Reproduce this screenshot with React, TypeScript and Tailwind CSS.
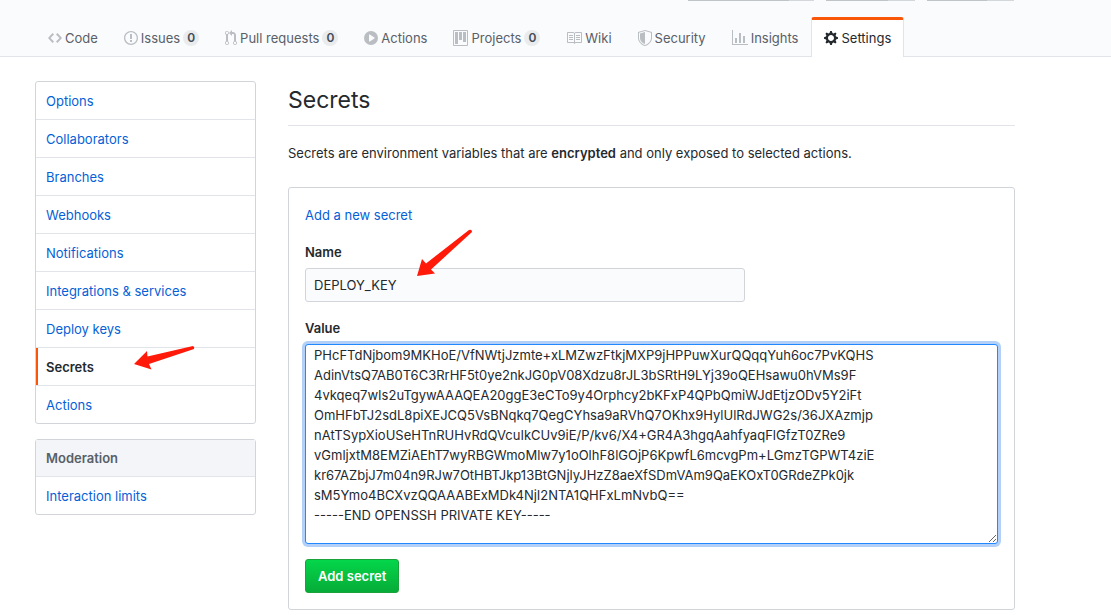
import React from "react";

type IconProps = { d: string; width: number; className?: string };

function Octicon({ d, width, className = "text-[#babec2]" }: IconProps) {
  return (
    <svg
      className={`shrink-0 fill-current ${className}`}
      width={width}
      height={16}
      viewBox={`0 0 ${width} 16`}
      fillRule="evenodd"
      aria-hidden="true"
    >
      <path d={d} />
    </svg>
  );
}

type Tab = { label: string; width: number; d: string; count?: number; current?: boolean };

const tabs: Tab[] = [
  {
    label: "Code",
    width: 14,
    d: "M9.5 3L8 4.5 11.5 8 8 11.5 9.5 13 14 8 9.5 3zm-5 0L0 8l4.5 5L6 11.5 2.5 8 6 4.5 4.5 3z",
  },
  {
    label: "Issues",
    width: 14,
    count: 0,
    d: "M7 2.3c3.14 0 5.7 2.56 5.7 5.7s-2.56 5.7-5.7 5.7A5.71 5.71 0 011.3 8c0-3.14 2.56-5.7 5.7-5.7zM7 1C3.14 1 0 4.14 0 8s3.14 7 7 7 7-3.14 7-7-3.14-7-7-7zm1 3H6v5h2V4zm0 6H6v2h2v-2z",
  },
  {
    label: "Pull requests",
    width: 12,
    count: 0,
    d: "M11 11.28V5c-.03-.78-.34-1.47-.94-2.06C9.46 2.35 8.78 2.03 8 2H7V0L4 3l3 3V4h1c.27.02.48.11.69.31.21.2.3.42.31.69v6.28A1.993 1.993 0 0010 15a1.993 1.993 0 001-3.72zm-1 2.92c-.66 0-1.2-.55-1.2-1.2 0-.65.55-1.2 1.2-1.2.65 0 1.2.55 1.2 1.2 0 .65-.55 1.2-1.2 1.2zM4 3c0-1.11-.89-2-2-2a1.993 1.993 0 00-1 3.72v6.56A1.993 1.993 0 002 15a1.993 1.993 0 001-3.72V4.72c.59-.34 1-.98 1-1.72zm-.8 10c0 .66-.55 1.2-1.2 1.2-.65 0-1.2-.55-1.2-1.2 0-.65.55-1.2 1.2-1.2.65 0 1.2.55 1.2 1.2zM2 4.2C1.34 4.2.8 3.65.8 3c0-.65.55-1.2 1.2-1.2.65 0 1.2.55 1.2 1.2 0 .65-.55 1.2-1.2 1.2z",
  },
  {
    label: "Actions",
    width: 14,
    d: "M14 8A7 7 0 110 8a7 7 0 0114 0zm-8.223 3.482l4.599-3.066a.5.5 0 000-.832L5.777 4.518A.5.5 0 005 4.934v6.132a.5.5 0 00.777.416z",
  },
  {
    label: "Projects",
    width: 15,
    count: 0,
    d: "M10 12h3V2h-3v10zm-4-2h3V2H6v8zm-4 4h3V2H2v12zm-1 1h13V1H1v14zM14 0H1a1 1 0 00-1 1v14a1 1 0 001 1h13a1 1 0 001-1V1a1 1 0 00-1-1z",
  },
  {
    label: "Wiki",
    width: 16,
    d: "M3 5h4v1H3V5zm0 3h4V7H3v1zm0 2h4V9H3v1zm11-5h-4v1h4V5zm0 2h-4v1h4V7zm0 2h-4v1h4V9zm2-6v9c0 .55-.45 1-1 1H9.5l-1 1-1-1H2c-.55 0-1-.45-1-1V3c0-.55.45-1 1-1h5.5l1 1 1-1H15c.55 0 1 .45 1 1zm-8 .5L7.5 3H2v9h6V3.5zm7-.5H9.5l-.5.5V12h6V3z",
  },
  {
    label: "Security",
    width: 14,
    d: "M0 2l7-2 7 2v6.02C14 12.69 8.69 16 7 16c-1.69 0-7-3.31-7-7.98V2zm1 .75L7 1l6 1.75v5.268C13 12.104 8.449 15 7 15c-1.449 0-6-2.896-6-6.982V2.75zm1 .75L7 2v12c-1.207 0-5-2.482-5-5.985V3.5z",
  },
  {
    label: "Insights",
    width: 16,
    d: "M16 14v1H0V0h1v14h15zM5 13H3V8h2v5zm4 0H7V3h2v10zm4 0h-2V6h2v7z",
  },
  {
    label: "Settings",
    width: 14,
    current: true,
    d: "M14 8.77v-1.6l-1.94-.64-.45-1.09.88-1.84-1.13-1.13-1.81.91-1.09-.45-.69-1.92h-1.6l-.63 1.94-1.11.45-1.84-.88-1.13 1.13.91 1.81-.45 1.09L0 7.23v1.59l1.94.64.45 1.09-.88 1.84 1.13 1.13 1.81-.91 1.09.45.69 1.92h1.59l.63-1.94 1.11-.45 1.84.88 1.13-1.13-.92-1.81.47-1.09L14 8.75v.02zM7 11c-1.66 0-3-1.34-3-3s1.34-3 3-3 3 1.34 3 3-1.34 3-3 3z",
  },
];

const menu = [
  "Options",
  "Collaborators",
  "Branches",
  "Webhooks",
  "Notifications",
  "Integrations & services",
  "Deploy keys",
  "Secrets",
  "Actions",
];

const secretValue = [
  "PHcFTdNjbom9MKHoE/VfNWtjJzmte+xLMZwzFtkjMXP9jHPPuwXurQQqqYuh6oc7PvKQHS",
  "AdinVtsQ7AB0T6C3RrHF5t0ye2nkJG0pV08Xdzu8rJL3bSRtH9LYj39oQEHsawu0hVMs9F",
  "4vkqeq7wIs2uTgywAAAQEA20ggE3eCTo9y4Orphcy2bKFxP4QPbQmiWJdEtjzODv5Y2iFt",
  "OmHFbTJ2sdL8piXEJCQ5VsBNqkq7QegCYhsa9aRVhQ7OKhx9HylUlRdJWG2s/36JXAzmjp",
  "nAtTSypXioUSeHTnRUHvRdQVcuIkCUv9iE/P/kv6/X4+GR4A3hgqAahfyaqFlGfzT0ZRe9",
  "vGmljxtM8EMZiAEhT7wyRBGWmoMlw7y1oOlhF8lGOjP6KpwfL6mcvgPm+LGmzTGPWT4ziE",
  "kr67AZbjJ7m04n9RJw7OtHBTJkp13BtGNjlyJHzZ8aeXfSDmVAm9QaEKOxT0GRdeZPk0jk",
  "sM5Ymo4BCXvzQQAAABExMDk4NjI2NTA1QHFxLmNvbQ==",
  "-----END OPENSSH PRIVATE KEY-----",
].join("\n");

function RepoHeader() {
  return (
    <header className="border-b border-[#e1e4e8] bg-[#fafbfc]">
      <div className="max-w-[1050px] px-[35px]">
        <div className="flex h-[17px] items-start justify-end gap-3 pr-px">
          <div className="h-px w-[126px] border-r-[25px] border-[#d3d6da] bg-[#c0c4c9]" />
          <div className="h-px w-[89px] border-r-[27px] border-[#d3d6da] bg-[#c0c4c9]" />
          <div className="h-px w-[87px] border-r-[27px] border-[#d3d6da] bg-[#c0c4c9]" />
        </div>
        <nav className="-mb-px flex" aria-label="Repository">
          {tabs.map((tab) => (
            <a
              key={tab.label}
              href="#"
              aria-current={tab.current ? "page" : undefined}
              className={`flex h-10 items-center gap-[3px] rounded-t-[3px] border-x border-t-[3px] px-3 pb-px whitespace-nowrap ${
                tab.current
                  ? "border-x-[#e1e4e8] border-t-[#f9560a] bg-white text-[#24292e]"
                  : "border-transparent text-[#586069]"
              }`}
            >
              <Octicon d={tab.d} width={tab.width} className={tab.current ? "text-[#24292e]" : undefined} />
              <span className="pt-0.5">{tab.label}</span>
              {tab.count !== undefined && (
                <span className="rounded-full bg-[#e9ebed] px-1 text-xs font-semibold text-[#444d56]">
                  {tab.count}
                </span>
              )}
            </a>
          ))}
        </nav>
      </div>
    </header>
  );
}

function Sidebar() {
  return (
    <aside className="w-[221px] shrink-0">
      <nav aria-label="Settings" className="overflow-hidden rounded-[3px] border border-[#d1d5da]">
        {menu.map((item) => (
          <a
            key={item}
            href="#"
            className={`relative block border-b border-[#e1e4e8] px-[10px] pt-[9px] pb-2 leading-5 last:border-b-0 ${
              item === "Secrets" ? "font-semibold text-[#24292e]" : "text-[#055fd8]"
            }`}
          >
            {item === "Secrets" && <span className="absolute inset-y-0 left-0 w-[2px] bg-[#f9560a]" />}
            {item}
            {item === "Secrets" && (
              <svg className="absolute -top-1 left-[97px]" width="64" height="28" viewBox="0 0 64 28" aria-hidden="true">
                <path fill="#ff1a0a" d="M1 20L14 7L14.500 12.500L60 2Q62 3 61 5L16 20L18.500 25.500Z" />
              </svg>
            )}
          </a>
        ))}
      </nav>
      <nav aria-label="Moderation" className="mt-[15px] rounded-[3px] border border-[#d1d5da]">
        <h2 className="border-b border-[#e1e4e8] bg-[#f3f5f8] px-[10px] py-2 leading-5 font-semibold text-[#586069]">
          Moderation
        </h2>
        <a href="#" className="block px-[10px] pt-[9px] pb-2 leading-5 text-[#055fd8]">
          Interaction limits
        </a>
      </nav>
    </aside>
  );
}

function SecretForm() {
  return (
    <form className="relative rounded-[3px] border border-[#d1d5da] p-4" onSubmit={(e) => e.preventDefault()}>
      <a href="#" className="block leading-[22px] text-[#055fd8]">
        Add a new secret
      </a>
      <label htmlFor="secret-name" className="mt-4 block leading-5 font-semibold">
        Name
      </label>
      <input
        id="secret-name"
        type="text"
        defaultValue="DEPLOY_KEY"
        className="mt-[6px] block h-[34px] w-[440px] max-w-full rounded-[3px] border border-[#d1d5da] bg-[#fafbfc] px-2 outline-none"
      />
      <label htmlFor="secret-value" className="mt-4 block leading-5 font-semibold">
        Value
      </label>
      <textarea
        id="secret-value"
        defaultValue={secretValue}
        spellCheck={false}
        className="mt-[6px] block h-[200px] w-full resize overflow-hidden rounded-[3px] border border-[#2188ff] bg-white px-2 leading-5 shadow-[0_0_0_3px_#b3d0f8] outline-none"
      />
      <button
        type="submit"
        className="mt-[15px] block h-[34px] rounded-[3px] border border-[#1aa33a] bg-linear-to-b from-[#04d64a] to-[#06ac38] px-3 pt-0.5 font-semibold text-white"
      >
        Add secret
      </button>
      <svg className="absolute top-[40px] left-[126px]" width="60" height="52" viewBox="0 0 60 52" aria-hidden="true">
        <path fill="#ff1a0a" d="M2 48L7 31L11 35.500L54 2Q57 1 57 4L16 41.500L20 45.500Z" />
      </svg>
    </form>
  );
}

export default function App() {
  return (
    <div className="min-h-screen bg-white font-['Inter',sans-serif] text-[13px] text-[#24292e]">
      <RepoHeader />
      <div className="flex max-w-[1050px] gap-8 px-[35px] pt-6 pb-[5px]">
        <Sidebar />
        <main className="min-w-0 flex-1">
          <h1 className="border-b border-[#e1e4e8] pb-[6px] text-[23px] leading-[38px]">Secrets</h1>
          <p className="mt-[17px] mb-6 leading-5">
            Secrets are environment variables that are <strong className="font-semibold">encrypted</strong> and only
            exposed to selected actions.
          </p>
          <SecretForm />
        </main>
      </div>
    </div>
  );
}
